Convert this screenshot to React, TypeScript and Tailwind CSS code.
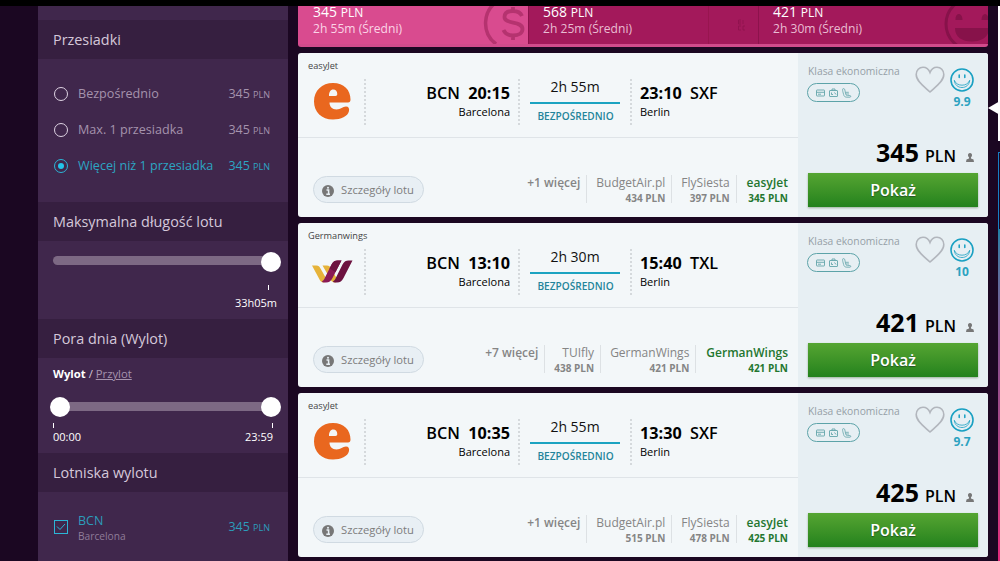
import type { ReactNode } from "react"
import clsx from "clsx"

type Provider = { name: string; price: number }

type Flight = {
    airline: string
    logo: "easyjet" | "germanwings"
    depart: string
    arrive: string
    duration: string
    to: string
    more: string
    providers: Provider[]
    score: string
    price: number
}

const flights: Flight[] = [
    {
        airline: "easyJet",
        logo: "easyjet",
        depart: "20:15",
        arrive: "23:10",
        duration: "2h 55m",
        to: "SXF",
        more: "+1 więcej",
        providers: [
            { name: "BudgetAir.pl", price: 434 },
            { name: "FlySiesta", price: 397 },
            { name: "easyJet", price: 345 },
        ],
        score: "9.9",
        price: 345,
    },
    {
        airline: "Germanwings",
        logo: "germanwings",
        depart: "13:10",
        arrive: "15:40",
        duration: "2h 30m",
        to: "TXL",
        more: "+7 więcej",
        providers: [
            { name: "TUIfly", price: 438 },
            { name: "GermanWings", price: 421 },
            { name: "GermanWings", price: 421 },
        ],
        score: "10",
        price: 421,
    },
    {
        airline: "easyJet",
        logo: "easyjet",
        depart: "10:35",
        arrive: "13:30",
        duration: "2h 55m",
        to: "SXF",
        more: "+1 więcej",
        providers: [
            { name: "BudgetAir.pl", price: 515 },
            { name: "FlySiesta", price: 478 },
            { name: "easyJet", price: 425 },
        ],
        score: "9.7",
        price: 425,
    },
]

const stops = [
    { label: "Bezpośrednio", active: false },
    { label: "Max. 1 przesiadka", active: false },
    { label: "Więcej niż 1 przesiadka", active: true },
]

function EasyJetLogo() {
    return (
        <svg width="37" height="37" viewBox="0 0 37 37">
            <path
                fill="#e9671f"
                fillRule="evenodd"
                d="M19 0C30 0 36.500 7 36.500 16.500Q36.500 19.500 34 19.500H15.500C15.500 23.500 18 26.500 22.500 26.500C27 26.500 28.500 23.500 32 23.500C34.500 23.500 35.500 25.500 35 28C33.800 33.500 27 36.500 19 36.500C7.500 36.500 0 29 0 18.500C0 7.500 8 0 19 0ZM15 13H21.500Q23.300 13 23.300 11.300C23.300 8.200 21.800 6.500 19.300 6.500C16.500 6.500 15 9 15 13Z"
            />
        </svg>
    )
}

function GermanwingsLogo() {
    return (
        <svg width="41" height="23" viewBox="0 0 41 23">
            <path fill="#e6b33a" d="M0 5.500H4.500C6.500 5.500 7.500 6.500 8.500 8.500L15 20L12 22.500C9.500 22.500 8.200 21 7 18.500Z" />
            <path fill="#e6b33a" d="M10.500 5.500H15C17 5.500 18 6.500 19 8.500L26 20.500L23.500 22.500C20.500 22.500 19 21 18 18.500Z" />
            <path fill="#8b1a54" d="M29.500 .5L20.500 18C19 21 17 22.500 14 22.500H12C10 22.500 9.500 21.500 10.500 21C12 20 12.500 18.500 13.500 16.500L19.800 4C21.200 1.500 23 .5 25.500 .5Z" />
            <path fill="#6d1240" d="M29.500 .5L23.500 12L17.500 8.500L19.800 4C21.200 1.500 23 .5 25.500 .5Z" />
            <path fill="#6d1240" d="M40.500 .5L31.500 18C30 21 28 22.500 25 22.500H23C21 22.500 20.500 21.500 21.500 21C23 20 23.500 18.500 24.500 16.500L30.800 4C32.200 1.500 34 .5 36.500 .5Z" />
        </svg>
    )
}

function Smiley() {
    return (
        <svg width="24" height="24" viewBox="0 0 24 24" fill="none" stroke="#19a0c2">
            <circle cx="12" cy="12" r="11" strokeWidth="1.600" />
            <path d="M4.300 12.300C4.800 17 8 19.500 12 19.500S19.200 17 19.700 12.300C18.500 15.500 15.500 17.200 12 17.200S5.500 15.500 4.300 12.300Z" strokeWidth=".8" />
            <path d="M9.200 7V9.500M14.800 7V9.500" strokeWidth="1.500" strokeLinecap="round" />
        </svg>
    )
}

function Heart() {
    return (
        <svg width="30" height="28" viewBox="0 0 30 28" fill="none" stroke="#b2b6bd" strokeWidth="1.600">
            <path d="M15 26C10 21.300 1.200 15.500 1.200 8.500C1.200 4.200 4.300 1.200 8 1.200C11.300 1.200 13.800 3.300 15 6.500C16.200 3.300 18.700 1.200 22 1.200C25.700 1.200 28.800 4.200 28.800 8.500C28.800 15.500 20 21.300 15 26Z" />
        </svg>
    )
}

function Amenities() {
    return (
        <div className="flex h-[19px] w-[53px] items-center justify-center rounded-full border border-[#5da3a8]">
            <svg width="36" height="10" viewBox="0 0 36 10" fill="none" stroke="#63a5aa" strokeWidth=".9">
                <rect x=".5" y="2" width="8" height="6" rx=".5" />
                <path d="M.5 4.300H8.500M2 6.200H5" />
                <rect x="13.500" y="2.500" width="8" height="6" rx=".5" />
                <path d="M16 2.500V1H19V2.500M15.500 4.500V6.500H17M18.500 4.500L20 6.500" />
                <path d="M27.500 .6C26.300 .6 26.500 2 26.800 3.500L27.600 6.500C28 8.400 29 9.200 31 9.200H34C35 9.200 35 7.600 34 7.600H31.500C30.300 7.600 30 7 29.700 6L28.800 1.800C28.600 1 28.300 .6 27.500 .6ZM29.500 4.300H32.800M30 6H33" strokeWidth=".8" />
            </svg>
        </div>
    )
}

function Dots() {
    return <div className="h-[46px] w-[2px] shrink-0 bg-[repeating-linear-gradient(to_bottom,#d5d9dc_0px,#d5d9dc_2px,transparent_2px,transparent_4px)]" />
}

function SectionTitle({ children }: { children: ReactNode }) {
    return <h3 className="flex h-[39px] items-center bg-[#361f40] pl-[15px] text-[14.400px] text-[#d5c8da]">{children}</h3>
}

function Price({ value }: { value: number }) {
    return (
        <span className="text-[12.500px]">
            {value} <span className="text-[9px]">PLN</span>
        </span>
    )
}

function Knob({ className }: { className: string }) {
    return <span className={clsx("absolute size-5 rounded-full bg-white", className)} />
}

function Sidebar() {
    return (
        <aside className="w-[250px] shrink-0 bg-[#40274c] pt-[14px] font-['Open_Sans',sans-serif]">
            <SectionTitle>Przesiadki</SectionTitle>
            <ul className="h-[143px] pt-[17px]">
                {stops.map((stop) => (
                    <li
                        key={stop.label}
                        className={clsx("flex h-9 items-center pr-[18px] pl-4", stop.active ? "text-[#2ca5c3]" : "text-[#a593ad]")}
                    >
                        <span
                            className={clsx(
                                "mr-2.5 flex size-[14px] items-center justify-center rounded-full border-[1.5px]",
                                stop.active ? "border-[#2cb5d6]" : "border-[#ded3e3]",
                            )}
                        >
                            {stop.active && <span className="size-1.5 rounded-full bg-[#23c4ea]" />}
                        </span>
                        <span className="grow text-[12.600px]">{stop.label}</span>
                        <Price value={345} />
                    </li>
                ))}
            </ul>

            <SectionTitle>Maksymalna długość lotu</SectionTitle>
            <div className="h-[78px] px-[15px] pt-[15px]">
                <div className="relative h-[9px] w-[220px] rounded-full bg-[#7d6984]">
                    <Knob className="-top-1 left-[208px]" />
                </div>
                <div className="mt-5 ml-[215px] h-[5px] w-px bg-white" />
                <div className="mt-[5px] -mr-[4px] text-right text-[11px] leading-[16px] text-white">33h05m</div>
            </div>

            <SectionTitle>Pora dnia (Wylot)</SectionTitle>
            <div className="h-[95px] px-[15px] pt-2">
                <div className="h-4 text-[11.300px] leading-[16px] text-[#d5c8da]">
                    <b className="text-white">Wylot</b> / <span className="text-[#a593ad] underline">Przylot</span>
                </div>
                <div className="relative mt-5 h-[9px] w-[220px] rounded-full bg-[#7d6984]">
                    <Knob className="-top-[5px] -left-[3px]" />
                    <Knob className="-top-[5px] left-[208px]" />
                </div>
                <div className="mt-3 flex w-[220px] justify-between">
                    <span className="h-[5px] w-px bg-white" />
                    <span className="h-[5px] w-px bg-white" />
                </div>
                <div className="mt-px flex w-[220px] justify-between text-[11px] leading-[16px] text-white">
                    <span>00:00</span>
                    <span>23:59</span>
                </div>
            </div>

            <SectionTitle>Lotniska wylotu</SectionTitle>
            <div className="flex h-[70px] items-center pr-[18px] pl-4 text-[#2c9cbb]">
                <span className="mr-2.5 flex size-[14px] items-center justify-center border border-[#2cb5d6]">
                    <svg width="10" height="8" viewBox="0 0 10 8" fill="none" stroke="#2cb5d6">
                        <path d="M1 3.500L4 6.500L9 1" />
                    </svg>
                </span>
                <div className="mt-[2px] grow">
                    <div className="text-[12.500px] leading-[16px]">BCN</div>
                    <div className="text-[10.200px] leading-[14px] text-[#8f7c98]">Barcelona</div>
                </div>
                <Price value={345} />
            </div>
        </aside>
    )
}

function Tabs() {
    const tabs = [345, 568, 421]
    const times = ["2h 55m", "2h 25m", "2h 30m"]
    return (
        <div className="flex h-[41px] shrink-0 rounded-b-[3px] border-b-[3px] border-[#d14b8c] bg-[#a3195b]">
            {tabs.map((price, i) => (
                <div
                    key={price}
                    className={clsx(
                        "relative h-[38px] w-[230px] pl-[15px]",
                        i === 0 ? "bg-[#d94b8f]" : "bg-[#a3195b] shadow-[inset_1px_0_0_#8d124c]",
                    )}
                >
                    <div className="h-[15px] text-[14px] leading-[12px] text-white">
                        {price} <span className="text-[12px]">PLN</span>
                    </div>
                    <div className={clsx("text-[12.100px] leading-[16px]", i === 0 ? "text-[#fbd3e6]" : "text-[#e9bcd2]")}>{times[i]} (Średni)</div>
                    {i === 0 && (
                        <svg className="absolute top-0 right-0" width="46" height="38" viewBox="0 0 46 38" fill="none" stroke="#b5336f">
                            <path d="M14 38A26 26 0 0 1 16 -5" strokeWidth="3.500" />
                            <path d="M40 10C38.500 6.500 35.500 5 31 5C26 5 22.500 7 22.500 11C22.500 19 40.500 14 40.500 23C40.500 27 37 29.500 31 29.500C26 29.500 23 27.500 21.500 24M31 1V5M31 29.500V34" strokeWidth="3.800" />
                        </svg>
                    )}
                    {i === 1 && (
                        <div className="absolute inset-y-0 right-0 flex w-[50px] items-center border-l border-[#98154f] pl-[29px]">
                            <svg width="8" height="12" viewBox="0 0 8 12" fill="none" stroke="#8d124c" strokeWidth=".8">
                                <path d="M3 1H.5V5H3M.5 3H3M5 1V5M3 7H.5V11H3M7 7H5V11H7" />
                            </svg>
                        </div>
                    )}
                    {i === 2 && (
                        <svg className="absolute top-0 right-0" width="44" height="38" viewBox="0 0 44 38">
                            <circle cx="28" cy="18" r="26" fill="none" stroke="#87124a" strokeWidth="3" />
                            <path fill="#87124a" d="M11 22H45C45 31 38 35.500 28 35.500S11 31 11 22ZM11.500 14C11 6 18.500 6 18.500 14ZM37.500 14C37.500 6 44.500 6 44.500 14Z" />
                        </svg>
                    )}
                </div>
            ))}
        </div>
    )
}

function FlightCard({ flight }: { flight: Flight }) {
    return (
        <article className="flex h-[164px] shrink-0 overflow-hidden rounded-[3px] bg-[#f3f7f9]">
            <div className="flex w-[500px] flex-col">
                <div className="flex h-[85px] border-b border-[#dfe4e8]">
                    <div className="flex w-[66px] flex-col pl-2.5">
                        <div className="mt-[7px] h-3 text-[9.200px] leading-[12px] whitespace-nowrap text-[#444]">{flight.airline}</div>
                        {flight.logo === "easyjet" ? (
                            <div className="mt-[11px] ml-1.5"><EasyJetLogo /></div>
                        ) : (
                            <div className="mt-[18px] ml-1"><GermanwingsLogo /></div>
                        )}
                    </div>
                    <div className="flex pt-[26px]">
                        <Dots />
                        <div className="w-[144px] pt-[3px] text-right text-black">
                            <div className="text-[16.200px] leading-[22px] font-semibold whitespace-pre">BCN  <span className="font-bold">{flight.depart}</span></div>
                            <div className="text-[11px] leading-[16px]">Barcelona</div>
                        </div>
                        <div className="w-2" />
                        <Dots />
                        <div className="flex w-[110px] flex-col items-center">
                            <div className="-mt-px text-[14px] leading-[18px] text-[#111]">{flight.duration}</div>
                            <div className="mt-[6px] h-[2px] w-[90px] bg-[#1ba3c1]" />
                            <div className="mt-1 pl-px text-[10.100px] leading-[16px] font-semibold text-[#23849a]">BEZPOŚREDNIO</div>
                        </div>
                        <Dots />
                        <div className="pt-[3px] pl-2 text-black">
                            <div className="text-[16.200px] leading-[22px] font-semibold whitespace-pre"><span className="font-bold">{flight.arrive}</span>  {flight.to}</div>
                            <div className="text-[11px] leading-[16px]">Berlin</div>
                        </div>
                    </div>
                </div>
                <div className="flex grow justify-between pr-2.5 pl-[15px]">
                    <button className="mt-[38px] flex h-[27px] w-[111px] items-center rounded-full border border-[#d0dae2] bg-[#e8eff4] pt-0.5 pl-2 text-[11.200px] font-medium text-[#7d7d7d]">
                        <svg className="mr-[7px]" width="12" height="12" viewBox="0 0 12 12">
                            <circle cx="6" cy="6" r="6" fill="#777" />
                            <path d="M4.500 5H6.600V9M4.300 9.200H8" fill="none" stroke="#e8eff4" strokeWidth="1.500" />
                            <circle cx="6" cy="2.800" r="1" fill="#e8eff4" />
                        </svg>
                        Szczegóły lotu
                    </button>
                    <div className="mt-[37px] flex h-7 text-right text-[#858585]">
                        <div className="pr-[6px] text-[12px] leading-[16px] font-semibold">{flight.more}</div>
                        {flight.providers.map((provider, i) => (
                            <div
                                key={i}
                                className={clsx("border-l border-[#dde1e4]", i === 2 ? "pl-[10px] font-semibold text-[#23762f]" : "pr-[6px] pl-[9px]")}
                            >
                                <div className="text-[12px] leading-[16px]">{provider.name}</div>
                                <div className="text-[10px] leading-[14px] font-bold">{provider.price} PLN</div>
                            </div>
                        ))}
                    </div>
                </div>
            </div>

            <div className="flex w-[190px] flex-col bg-[#e7eff3] px-2.5">
                <div className="flex h-[66px]">
                    <div className="mt-3 -ml-px w-[108px]">
                        <div className="ml-px h-[18px] text-[10.300px] leading-[13px] whitespace-nowrap text-[#96a0a7]">Klasa ekonomiczna</div>
                        <Amenities />
                    </div>
                    <div className="mt-[13px]"><Heart /></div>
                    <div className="mt-[15px] ml-[5px] flex w-6 flex-col items-center">
                        <Smiley />
                        <span className="mt-[2px] text-[12px] leading-[16px] font-bold text-[#2ba2c0]">{flight.score}</span>
                    </div>
                </div>
                <div className="flex h-[54px] items-baseline justify-end pt-[16px] pr-1 text-black">
                    <span className="text-[25px] leading-[34px] font-bold">{flight.price}</span>
                    <span className="ml-[6px] text-[16px] font-semibold">PLN</span>
                    <svg className="ml-[10px]" width="8" height="9" viewBox="0 0 8 9" fill="#777">
                        <path d="M4 0C5.500 0 6 1 6 2.200C6 3.300 5.400 4 5 4.300V5.500L7.500 6.500L8 9H0L.5 6.500L3 5.500V4.300C2.600 4 2 3.300 2 2.200C2 1 2.500 0 4 0Z" />
                    </svg>
                </div>
                <button className="h-[34px] bg-linear-to-b from-[#55a532] to-[#22821d] text-[16px] font-semibold text-white shadow-[0_1px_2px_#9cb09c] text-shadow-[0_1px_1px_#225522]">
                    Pokaż
                </button>
            </div>
        </article>
    )
}

export default function App() {
    return (
        <div className="relative h-[561px] w-[1000px] overflow-hidden bg-[#1b0722] font-['Open_Sans',sans-serif]">
            <div className="h-1.5 bg-black" />
            <div className="flex h-[555px] pl-[38px]">
                <Sidebar />
                <main className="ml-2.5 flex w-[690px] shrink-0 flex-col gap-1.5">
                    <Tabs />
                    {flights.map((flight, i) => (
                        <FlightCard key={i} flight={flight} />
                    ))}
                </main>
                <div className="flex w-3 flex-col items-end">
                    <div className="h-[135px] w-0.5 bg-white" />
                    <div className="mt-[11px] h-[77px] w-0.5 border-t border-l border-[#167fc4]" />
                    <div className="w-0.5 grow bg-linear-to-b from-[#1b7fa5] via-[#85508f] via-35% to-[#e5297d]" />
                </div>
            </div>
            <svg className="absolute top-[101px] left-[988px]" width="12" height="14" viewBox="0 0 12 14">
                <path d="M0 7L12 0V14Z" fill="#fff" />
            </svg>
        </div>
    )
}
